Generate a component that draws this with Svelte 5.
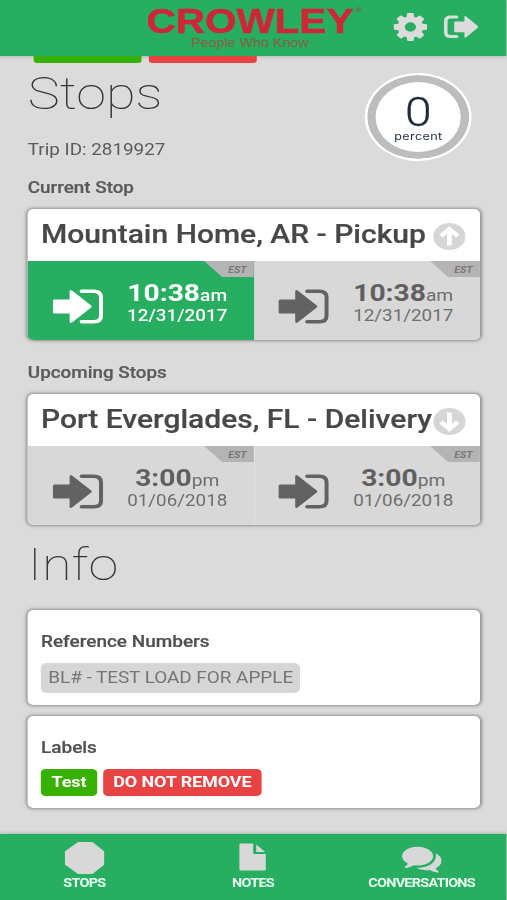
<script>
  let percent = 0;
  let tripId = '2819927';

  let sections = [
    {
      heading: 'Current Stop',
      title: 'Mountain Home, AR - Pickup',
      direction: 'up',
      times: [
        { time: '10:38', suffix: 'am', date: '12/31/2017', active: true },
        { time: '10:38', suffix: 'am', date: '12/31/2017', active: false }
      ]
    },
    {
      heading: 'Upcoming Stops',
      title: 'Port Everglades, FL - Delivery',
      direction: 'down',
      times: [
        { time: '3:00', suffix: 'pm', date: '01/06/2018', active: false },
        { time: '3:00', suffix: 'pm', date: '01/06/2018', active: false }
      ]
    }
  ];

  let references = ['BL# - TEST LOAD FOR APPLE'];
  let labels = [
    { text: 'Test', color: 'green' },
    { text: 'DO NOT REMOVE', color: 'red' }
  ];
</script>

<div class="screen">
  <header>
    <svg class="logo" width="184" height="56" viewBox="0 0 184 56">
      <text class="brand" x="0" y="32.7" textLength="172.500" lengthAdjust="spacingAndGlyphs">CROWLEY</text>
      <text class="reg" x="174.500" y="12.500">®</text>
      <text class="slogan" x="37" y="47" textLength="98" lengthAdjust="spacingAndGlyphs">People Who Know</text>
      <text class="slogan-reg" x="136" y="44">®</text>
    </svg>
    <div class="actions">
      <svg width="28" height="28" viewBox="128 128 1536 1536">
        <path d="M1152 896q0-106-75-181t-181-75-181 75-75 181 75 181 181 75 181-75 75-181zm512-109v222q0 12-8 23t-20 13l-185 28q-19 54-39 91 35 50 107 138 10 12 10 25t-9 23q-27 37-99 108t-94 71q-12 0-26-9l-138-108q-44 23-91 38-16 136-29 186-7 28-36 28h-222q-14 0-24.5-8.5t-11.5-21.5l-28-184q-49-16-90-37l-141 107q-10 9-25 9-14 0-25-11-126-114-165-168-7-10-7-23 0-12 8-23 15-21 51-66.5t54-70.5q-27-50-41-99l-183-27q-13-2-21-12.5t-8-23.5v-222q0-12 8-23t19-13l186-28q14-46 39-92-40-57-107-138-10-12-10-24 0-10 9-23 26-36 98.5-107.5t94.5-71.5q13 0 26 10l138 107q44-23 91-38 16-136 29-186 7-28 36-28h222q14 0 24.5 8.5t11.5 21.5l28 184q49 16 90 37l142-107q9-9 24-9 13 0 25 10 129 119 165 170 7 8 7 22 0 12-8 23-15 21-51 66.5t-54 70.5q26 50 41 98l183 28q13 2 21 12.5t8 23.5z" />
      </svg>
      <svg width="29" height="24" viewBox="0 0 29 24">
        <path class="line" d="M10.500 2H5.500Q1.500 2 1.500 6v11.500q0 4 4 4h5" />
        <path d="M8.500 7.500q0-1 1-1H17V2q0-1.800 1.500-.6l9.600 9.600q.8.900 0 1.800l-9.600 9.400q-1.500 1.200-1.500-.6v-4.300H9.500q-1 0-1-1z" />
      </svg>
    </div>
  </header>

  <main>
    <div class="tabs">
      <span class="tab green"></span>
      <span class="tab red"></span>
    </div>

    <div class="trip">
      <div>
        <h1>Stops</h1>
        <p class="trip-id">Trip ID: {tripId}</p>
      </div>
      <div class="ring">
        <span class="value">{percent}</span>
        <span class="unit">percent</span>
      </div>
    </div>

    {#each sections as stop}
      <h2>{stop.heading}</h2>
      <section class="card stop">
        <div class="stop-title">
          <span>{stop.title}</span>
          <svg class={stop.direction} width="27" height="27" viewBox="0 0 27 27">
            <circle cx="13.500" cy="13.500" r="13.500" />
            <path d="M13.500 22.500V7M6.500 13l7-7 7 7" />
          </svg>
        </div>
        <div class="times">
          {#each stop.times as t}
            <div class="cell" class:active={t.active}>
              <svg width="42" height="35" viewBox="0 0 42 35">
                <path d="M0 12q0-1.500 1.500-1.500H14V2.500Q14 0 16 1.500L32 16.500q1 1 0 2L16 33.500q-2 1.200-2-1v-8H1.500Q0 24.500 0 23z" />
                <path class="line" d="M24 2.200h10q6.200 0 6.200 6.300v18q0 6.300-6.200 6.300H24" />
              </svg>
              <div class="when">
                <div class="clock"><b>{t.time}</b>{t.suffix}</div>
                <div class="date">{t.date}</div>
              </div>
              <span class="est">EST</span>
            </div>
          {/each}
        </div>
      </section>
    {/each}

    <h1 class="info">Info</h1>

    <section class="card refs">
      <h3>Reference Numbers</h3>
      {#each references as ref}
        <span class="ref">{ref}</span>
      {/each}
    </section>

    <section class="card labels">
      <h3>Labels</h3>
      <div class="badges">
        {#each labels as label}
          <span class="badge {label.color}">{label.text}</span>
        {/each}
      </div>
    </section>
  </main>

  <nav>
    <a href="#stops">
      <svg width="33" height="32" viewBox="0 0 33 32"><path d="M11 0h12l10 9.500v13L23 32H11L0 22.500v-13z" /></svg>
      <span>STOPS</span>
    </a>
    <a href="#notes">
      <svg width="33" height="32" viewBox="0 0 33 32">
        <path d="M5.500 2.500q0-1 1-1H17v9.500q0 1 1 1h9.500v15.500q0 1-1 1h-20q-1 0-1-1zM19.500 2.500l7.500 7.500h-7.500z" />
      </svg>
      <span>NOTES</span>
    </a>
    <a href="#conversations">
      <svg width="33" height="32" viewBox="0 0 1792 1738">
        <path d="M1408 768q0 139-94 257t-256.5 186.500-353.500 68.500q-86 0-176-16-124 88-278 128-36 9-86 16h-3q-11 0-20.500-8t-11.500-21q-1-3-1-6.500t.5-6.500 2-6l2.500-5 3.500-5.500 4-5 4.500-5 4-4.500q5-6 23-25t26-29.500 22.500-29 25-38.500 20.500-44q-124-72-195-177t-71-224q0-139 94-257t256.500-186.500 353.500-68.500 353.500 68.500 256.500 186.500 94 257zm384 256q0 120-71 224.500t-195 176.500q10 24 20.500 44t25 38.500 22.500 29 26 29.500 23 25q1 1 4 4.500t4.500 5 4 5 3.500 5.500l2.500 5 2 6 .5 6.500-1 6.500q-3 14-13 22t-22 7q-50-7-86-16-154-40-278-128-90 16-176 16-271 0-472-132 58 4 88 4 161 0 309-45t264-129q125-92 192-212t67-257q0-77-23-152 129 71 204 178t75 230z" />
      </svg>
      <span>CONVERSATIONS</span>
    </a>
  </nav>
</div>

<style>
  :global(body) {
    background: #dbdbdb;
    overflow: hidden;
  }
  .screen {
    width: 421.67px;
    height: 900px;
    display: flex;
    flex-direction: column;
    transform: scaleX(1.2);
    transform-origin: 0 0;
    font-family: Roboto, sans-serif;
    color: #5a5a5a;
    background: #dbdbdb;
  }
  header {
    height: 56px;
    flex: none;
    box-sizing: border-box;
    display: flex;
    justify-content: space-between;
    padding: 0 23px 0 121.500px;
    background: #27ae60;
    box-shadow: 0 1px 3px rgba(0, 0, 0, 0.18);
  }
  .logo {
    fill: #cf2637;
    font-family: "Liberation Sans", sans-serif;
    overflow: visible;
  }
  .brand {
    font-size: 35.800px;
    font-weight: bold;
    stroke: #cf2637;
    stroke-width: 0.5;
  }
  .reg {
    font-size: 6px;
  }
  .slogan {
    font-size: 12px;
    fill: #8d5a3c;
  }
  .slogan-reg {
    font-size: 4px;
    fill: #8d5a3c;
  }
  .actions {
    display: flex;
    align-items: center;
    gap: 14px;
    height: 53px;
    fill: #dcdcdc;
  }
  .line {
    fill: none;
    stroke: #dcdcdc;
    stroke-width: 3;
    stroke-linecap: round;
  }
  main {
    flex: 1;
    padding: 0 21.800px 0 23.200px;
  }
  .tabs {
    display: flex;
    gap: 6px;
    padding-left: 5.300px;
  }
  .tab {
    width: 90px;
    height: 7px;
    border-radius: 0 0 3px 3px;
  }
  .green {
    background: #38b000;
  }
  .red {
    background: #e84343;
  }
  .trip {
    display: flex;
    justify-content: space-between;
    height: 115px;
    padding-right: 6.700px;
  }
  h1 {
    margin: 0;
    font-size: 45px;
    font-weight: 100;
    line-height: 61px;
    color: #333;
  }
  .trip-id {
    margin: 16px 0 0;
    font-size: 15.700px;
    line-height: 20px;
  }
  .ring {
    box-sizing: border-box;
    width: 89px;
    height: 88px;
    margin-top: 10px;
    border: 2px solid #fff;
    border-radius: 50%;
    background: #fff;
    box-shadow: inset 0 0 0 7px #bdbdbd;
    display: flex;
    flex-direction: column;
    align-items: center;
    color: #1c2a3a;
  }
  .value {
    margin-top: 20px;
    font-size: 40px;
    font-weight: 300;
    line-height: 36px;
    -webkit-text-stroke: 0.3px #1c2a3a;
  }
  .unit {
    font-family: Inter, sans-serif;
    font-size: 10.500px;
    letter-spacing: 0.3px;
    line-height: 12px;
  }
  h2 {
    margin: 0 0 11px;
    font-size: 15.700px;
    font-weight: 500;
    line-height: 20px;
    -webkit-text-stroke: 0.2px #5a5a5a;
  }
  .card {
    border-radius: 5px;
    background: #fff;
    box-shadow: 0 0 3px 1px rgba(0, 0, 0, 0.35);
  }
  .stop {
    height: 131px;
    margin-bottom: 23px;
    overflow: hidden;
  }
  .stop-title {
    display: flex;
    align-items: center;
    justify-content: space-between;
    height: 52px;
    padding: 0 11.500px 0 11px;
    font-size: 25px;
    font-weight: 500;
    color: #484848;
    white-space: nowrap;
    -webkit-text-stroke: 0.2px #484848;
  }
  .stop-title span {
    width: 327px;
    margin-top: -2px;
  }
  .stop-title svg {
    flex: none;
    margin-top: 2px;
  }
  .stop-title circle {
    fill: #d6d6d6;
  }
  .stop-title path {
    fill: none;
    stroke: #fff;
    stroke-width: 4;
  }
  .down {
    transform: rotate(180deg);
  }
  .times {
    display: flex;
    height: 79px;
  }
  .cell {
    flex: 1;
    position: relative;
    display: flex;
    align-items: flex-start;
    padding-left: 20.500px;
    background: #d8d8d8;
    color: #6e6e6e;
    fill: #626262;
  }
  .cell svg {
    margin-top: 27.500px;
  }
  .cell .line {
    stroke: #626262;
    stroke-width: 3.400;
  }
  .cell.active {
    background: #27ae60;
    color: #fff;
    fill: #fff;
  }
  .cell.active .line {
    stroke: #fff;
  }
  .when {
    width: 84px;
    margin: 19px 0 0 20px;
    text-align: center;
    white-space: nowrap;
  }
  .clock {
    font-size: 16px;
    line-height: 27px;
  }
  .clock b {
    font-size: 23.500px;
    color: #606060;
  }
  .active .clock b {
    color: #fff;
  }
  .active .clock,
  .active .date {
    font-weight: 500;
  }
  .date {
    margin-top: -1px;
    font-size: 15.700px;
    line-height: 15px;
  }
  .est {
    position: absolute;
    top: 0;
    right: 0;
    box-sizing: border-box;
    width: 41.500px;
    height: 16px;
    padding-right: 6px;
    display: flex;
    justify-content: flex-end;
    font-size: 8.800px;
    font-weight: 700;
    font-style: italic;
    line-height: 18px;
    color: #777;
    background: #b4b4b4;
    clip-path: polygon(0 0, 100% 0, 100% 100%, 15px 100%);
  }
  .info {
    margin-top: -14px;
    height: 76px;
  }
  .refs {
    height: 95px;
    margin-bottom: 11px;
  }
  .labels {
    height: 92px;
  }
  .refs,
  .labels {
    box-sizing: border-box;
    padding: 22px 11px 0;
  }
  h3 {
    margin: 0;
    font-size: 15.800px;
    font-weight: 500;
    line-height: 20px;
    color: #505050;
    -webkit-text-stroke: 0.2px #505050;
  }
  .ref {
    display: inline-block;
    margin-top: 11px;
    padding: 0 6px;
    border-radius: 5px;
    font-size: 15.800px;
    line-height: 30px;
    letter-spacing: -0.04px;
    color: #757575;
    background: #d6d6d6;
  }
  .badges {
    display: flex;
    gap: 5px;
    margin-top: 11px;
  }
  .badge {
    padding: 0 8.700px;
    border-radius: 4px;
    font-size: 15px;
    font-weight: 700;
    line-height: 27px;
    letter-spacing: -0.1px;
    color: #fff;
  }
  nav {
    display: flex;
    height: 66px;
    flex: none;
    background: #27ae60;
    box-shadow: 0 -1px 3px rgba(0, 0, 0, 0.18);
  }
  nav a {
    flex: 1;
    display: flex;
    flex-direction: column;
    align-items: center;
    padding-top: 8px;
    font-size: 12px;
    font-weight: 700;
    letter-spacing: -0.6px;
    color: #eafff2;
    text-decoration: none;
  }
  nav svg {
    fill: #d8d8d8;
  }
  nav span {
    line-height: 14px;
    margin-top: 2px;
  }
</style>
